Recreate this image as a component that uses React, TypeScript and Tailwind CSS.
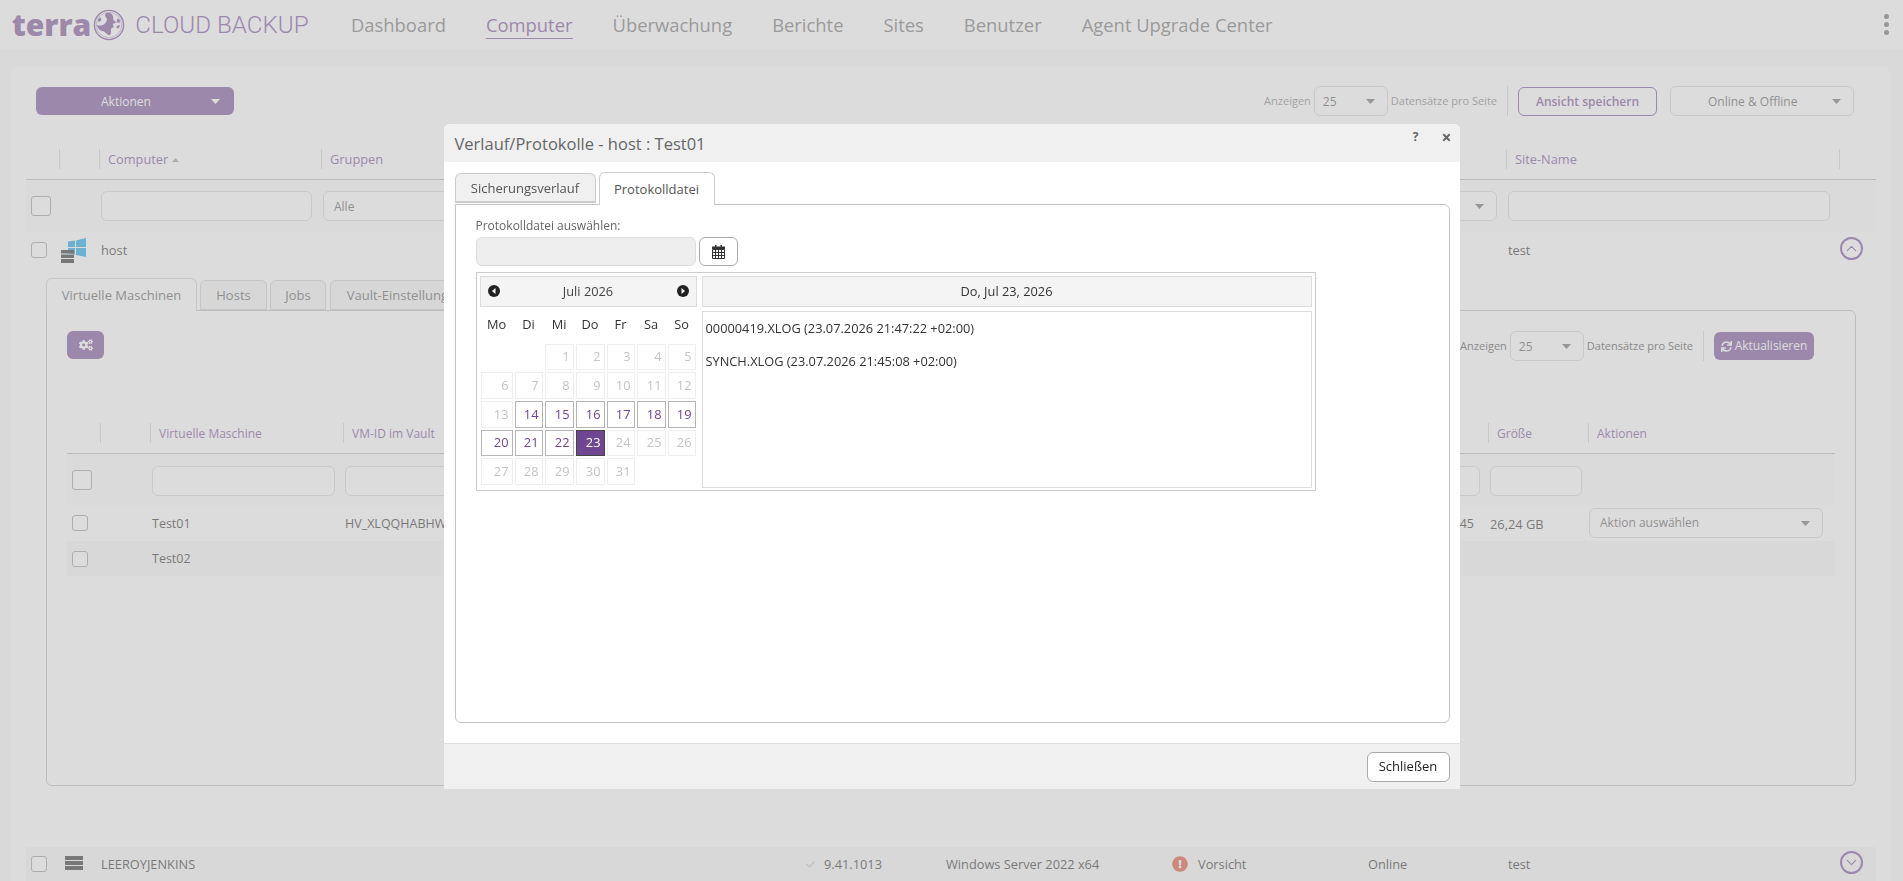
import { ChevronDown, ChevronUp } from 'lucide-react';
import React from 'react';
import { FaCheck, FaCogs, FaExclamationCircle, FaSync, FaTimes } from 'react-icons/fa';

const NAV = ['Dashboard', 'Computer', 'Überwachung', 'Berichte', 'Sites', 'Benutzer', 'Agent Upgrade Center'];

const DAYS = ['Mo', 'Di', 'Mi', 'Do', 'Fr', 'Sa', 'So'];
const ACTIVE_DAYS = [14, 15, 16, 17, 18, 19, 20, 21, 22];

const Caret = ({ className = 'text-[#666]' }: { className?: string }) => (
  <svg width="9" height="5" viewBox="0 0 9 5" className={`shrink-0 ${className}`}>
    <path d="M0 0h9L4.500 5z" fill="currentColor" />
  </svg>
);

const Checkbox = ({ large }: { large?: boolean }) => (
  <span
    className={`block rounded-[3px] border border-[#999] bg-white ${large ? 'h-5 w-5' : 'h-4 w-4'}`}
  />
);

const Select = ({
  label,
  className,
  labelClass = 'pt-px',
}: {
  label: string;
  className: string;
  labelClass?: string;
}) => (
  <div
    className={`flex h-[30px] shrink-0 items-center justify-between rounded-[6px] border border-[#d3d3d3] bg-white pr-[12px] text-[#555] ${className}`}
  >
    <span className={labelClass}>{label}</span>
    <Caret />
  </div>
);

const PageSize = ({ muted }: { muted?: boolean }) => (
  <div className={`flex items-center text-[11px] ${muted ? 'text-[#7d7d7d]' : 'text-[#444]'}`}>
    <span>Anzeigen</span>
    <Select label="25" className="mx-[3px] w-[74px] pl-[8px] text-[12px]" />
    <span>Datensätze pro Seite</span>
    <span className="ml-[10px] h-[30px] w-px bg-[#d3d3d3]" />
  </div>
);

const HeadCell = ({ label, className, sorted }: { label?: string; className: string; sorted?: boolean }) => (
  <div className={`flex h-5 shrink-0 items-center gap-1 border-l border-[#d3d3d3] pl-2 pt-[2px] text-[#6f4691] ${className}`}>
    {label}
    {sorted && (
      <svg width="7" height="4" viewBox="0 0 7 4" className="text-[#999]">
        <path d="M3.500 0L7 4H0z" fill="currentColor" />
      </svg>
    )}
  </div>
);

const Input = ({ className }: { className: string }) => (
  <div className={`h-[30px] shrink-0 rounded-[6px] border border-[#d3d3d3] bg-white ${className}`} />
);

const Circle = ({ up }: { up?: boolean }) => (
  <span className="flex h-[23px] w-[23px] items-center justify-center rounded-full border-2 border-[#6f4691] text-[#6f4691]">
    {up ? <ChevronUp size={17} strokeWidth={1.5} /> : <ChevronDown size={17} strokeWidth={1.5} />}
  </span>
);

const Tab = ({ label, className }: { label: string; className: string }) => (
  <div
    className={`mt-[2px] flex h-[30px] items-center rounded-t-[6px] border border-[#ccc] bg-[#f3f3f3] pt-[2px] text-[13px] text-[#555] ${className}`}
  >
    {label}
  </div>
);

const WindowsHost = () => (
  <svg width="25" height="25" viewBox="0 0 25 25">
    <path d="M7 3.500l7-1V9H7zM15 2.400L25 0v9H15zM7 10h7v6.500l-7-1zM15 10h10v9l-10-2z" fill="#0a9fe6" />
    <path d="M0 12h13v3.500H0zM0 16.500h13V20H0zM0 21h13v4H0z" fill="#222" />
  </svg>
);

const Globe = () => (
  <svg width="32" height="32" viewBox="0 0 34 34" className="ml-[2px] text-[#6f4691]">
    <circle cx="17" cy="17" r="15.500" fill="none" stroke="currentColor" strokeWidth="1.500" />
    <circle cx="17" cy="17" r="13.500" fill="none" stroke="currentColor" strokeWidth="0.500" />
    <path
      d="M13 5c3-2 7-1 8 2 1 2 0 4 1 5l3 2-4 2 1 3-3 2c0 3 1 6-2 7-3-2-5-5-8-5-3-1-4-3-5-6 3 1 6 1 8-1 2-1 2-3 3-5-1-2-3-4-2-6z"
      fill="currentColor"
    />
    <path d="M26 10l3 2-1 3-3-1zM25 18l4-1-2 4-2-1zM5 11l3-2 1 3-3 2z" fill="currentColor" />
  </svg>
);

const CalendarIcon = () => (
  <svg width="13" height="14" viewBox="0 0 13 14" className="text-[#333]">
    <path d="M3 0h1.500v2H3zM8.500 0H10v2H8.500z" fill="currentColor" />
    <path d="M0 1.500h13V4H0z" fill="currentColor" />
    <path
      d="M.5 4.500h12v9H.5zM3.500 4.500v9M6.500 4.500v9M9.500 4.500v9M.5 7.500h12M.5 10.500h12"
      fill="none"
      stroke="currentColor"
      strokeWidth="1"
    />
  </svg>
);

const MonthArrow = ({ left }: { left?: boolean }) => (
  <svg width="12" height="12" viewBox="0 0 12 12" className="mb-[2px]">
    <circle cx="6" cy="6" r="6" fill="#222" />
    <path d={left ? 'M7.500 3v6L4 6z' : 'M4.500 3v6L8 6z'} fill="#fff" />
  </svg>
);

const DayCell = ({ day }: { day: number }) => {
  const selected = day === 23;
  const active = ACTIVE_DAYS.includes(day);
  let tone = 'border-[#eee] text-[#c4c4c4]';
  if (active) tone = 'border-[#b5b5b5] text-[#6f4691]';
  if (selected) tone = 'border-[#444] bg-[#6f4691] text-white';
  return <div className={`flex items-center justify-end border pr-[3px] text-[12.800px] ${tone}`}>{day}</div>;
};

const Calendar = () => (
  <div className="flex h-[219px] w-[840px] gap-[5px] border border-[#ccc] p-[3px] text-[12.800px]">
    <div className="w-[217px] shrink-0">
      <div className="flex h-[31px] items-center justify-between border border-[#ddd] bg-[#f4f4f4] px-[7px] text-[#444]">
        <MonthArrow left />
        <span>Juli 2026</span>
        <MonthArrow />
      </div>
      <div className="ml-[1px] grid grid-cols-[32px_28px_29px_29px_28px_29px_28px] gap-x-[2px]">
        {DAYS.map((d) => (
          <div key={d} className="flex h-[37px] items-center justify-center pb-[2px] text-[#333]">
            {d}
          </div>
        ))}
      </div>
      <div className="ml-[1px] grid grid-cols-[32px_28px_29px_29px_28px_29px_28px] grid-rows-[26px_27px_27px_26px_27px] gap-x-[2px] gap-y-[2px]">
        <span />
        <span />
        {Array.from({ length: 31 }, (_, i) => (
          <DayCell key={i} day={i + 1} />
        ))}
      </div>
    </div>
    <div className="w-[610px] shrink-0">
      <div className="flex h-[31px] items-center justify-center border border-[#ddd] bg-[#f4f4f4] text-[#333]">
        Do, Jul 23, 2026
      </div>
      <div className="mt-[4px] h-[177px] border border-[#ddd] pl-[3px] pt-[4px] text-[#333]">
        <p className="h-[33px] leading-[25px]">00000419.XLOG (23.07.2026 21:47:22 +02:00)</p>
        <p className="leading-[25px]">SYNCH.XLOG (23.07.2026 21:45:08 +02:00)</p>
      </div>
    </div>
  </div>
);

const Modal = () => (
  <div className="fixed inset-0 z-20 flex justify-center pt-[124px]">
    <div className="flex h-[665px] w-[1016px] flex-col rounded-t-[6px] bg-white">
      <div className="flex h-[38px] shrink-0 items-center justify-between rounded-t-[6px] bg-[#f0f0f0] pl-[11px] pr-[8px]">
        <span className="pt-[2px] text-[16.500px] text-[#666]">Verlauf/Protokolle - host : Test01</span>
        <div className="mb-[12px] flex items-center gap-[22px] text-[#666]">
          <span className="text-[12px] font-bold">?</span>
          <FaTimes size={11} />
        </div>
      </div>
      <div className="ml-[11px] mt-[10px] flex items-end">
        <div className="mb-[1px] flex h-[30px] w-[141px] items-center justify-center rounded-t-[6px] border border-b-2 border-[#ccc] bg-[#f0f0f0] pt-[2px] text-[13px] text-[#555]">
          Sicherungsverlauf
        </div>
        <div className="relative z-10 ml-[3px] -mb-px flex h-[33px] w-[116px] items-center justify-center rounded-t-[6px] border border-b-0 border-[#ccc] bg-white pt-[2px] text-[13px] text-[#555]">
          Protokolldatei
        </div>
      </div>
      <div className="ml-[11px] mr-[10px] h-[519px] rounded-b-[6px] rounded-tr-[6px] border border-[#c4c4c4] pl-[20px] pt-[13px]">
        <p className="h-[19px] text-[12px] leading-[16px] text-[#666]">Protokolldatei auswählen:</p>
        <div className="flex gap-[3px]">
          <div className="h-[29px] w-[220px] rounded-[6px] border border-[#ddd] bg-[#eee]" />
          <div className="flex h-[29px] w-[39px] items-center justify-center rounded-[6px] border border-[#aaa] bg-white">
            <CalendarIcon />
          </div>
        </div>
        <div className="mt-[6px]">
          <Calendar />
        </div>
      </div>
      <div className="mt-[20px] flex h-[46px] flex-1 items-center justify-end border-t border-[#ddd] bg-[#f0f0f0] pr-[10px]">
        <div className="flex h-[30px] w-[83px] items-center justify-center rounded-[6px] border border-[#aaa] bg-white text-[13px] text-[#222]">
          Schließen
        </div>
      </div>
    </div>
  </div>
);

const Header = () => (
  <header className="flex h-[51px] items-center border-b border-[#f1f1f1] bg-white pl-3">
    <div className="flex w-[339px] items-center text-[#6f4691]">
      <span className="text-[30px] font-extrabold leading-none">terra</span>
      <Globe />
      <span className="ml-[10px] font-['Roboto',sans-serif] text-[24.200px] font-light">CLOUD BACKUP</span>
    </div>
    <nav className="flex gap-[40px] text-[18.400px] text-[#6d6d6d]">
      {NAV.map((item) => (
        <span key={item} className={item === 'Computer' ? 'border-b border-[#6f4691] text-[#6f4691]' : 'border-b border-transparent'}>
          {item}
        </span>
      ))}
    </nav>
    <div className="mb-[2px] ml-auto mr-[14px] flex flex-col gap-[3px]">
      <span className="h-[5px] w-[5px] rounded-full bg-[#666]" />
      <span className="h-[5px] w-[5px] rounded-full bg-[#666]" />
      <span className="h-[5px] w-[5px] rounded-full bg-[#666]" />
    </div>
  </header>
);

const VmTable = () => (
  <div className="mx-[20px] mt-[62px] text-[12.500px] text-[#222]">
    <div className="flex h-[31px] border-b border-[#b6b6b6] text-[12px]">
      <span className="w-[33px] shrink-0" />
      <HeadCell className="w-[50px]" />
      <HeadCell className="w-[193px]" label="Virtuelle Maschine" />
      <HeadCell className="w-[1145px]" label="VM-ID im Vault" />
      <HeadCell className="w-[100px]" label="Größe" />
      <HeadCell className="flex-1" label="Aktionen" />
    </div>
    <div className="flex h-[51px] items-start bg-[#fbfbfb] pt-[12px]">
      <span className="mt-[4px] w-[85px] shrink-0 pl-[5px]">
        <Checkbox large />
      </span>
      <Input className="w-[183px]" />
      <Input className="ml-[10px] w-[1135px]" />
      <Input className="ml-[10px] w-[92px]" />
    </div>
    <div className="flex h-[36px] items-center">
      <span className="w-[85px] shrink-0 pl-[5px]">
        <Checkbox />
      </span>
      <span className="w-[193px] shrink-0 pt-[3px]">Test01</span>
      <span className="w-[1100px] shrink-0 pt-[3px]">HV_XLQQHABHW</span>
      <span className="w-[45px] shrink-0 pr-[16px] pt-[3px] text-right">45</span>
      <span className="w-[99px] shrink-0 pt-[3px] text-[12.800px]">26,24 GB</span>
      <Select label="Aktion auswählen" labelClass="" className="w-[234px] pl-[10px] text-[12px]" />
    </div>
    <div className="flex h-[35px] items-center bg-[#f6f6f6]">
      <span className="w-[85px] shrink-0 pl-[5px]">
        <Checkbox />
      </span>
      <span className="pt-px">Test02</span>
    </div>
  </div>
);

const DetailTabs = () => (
  <div className="ml-[20px] mt-[10px] w-[1810px]">
    <div className="flex h-[32px] items-start gap-[3px]">
      <div className="relative z-[1] flex h-[33px] w-[151px] items-center justify-center rounded-t-[6px] border border-b-0 border-[#ccc] bg-white pt-[2px] text-[13px] text-[#555]">
        Virtuelle Maschinen
      </div>
      <Tab label="Hosts" className="w-[67px] justify-center" />
      <Tab label="Jobs" className="w-[56px] justify-center" />
      <Tab label="Vault-Einstellungen" className="ml-px w-[150px] justify-center" />
    </div>
    <div className="h-[476px] rounded-b-[6px] rounded-tr-[6px] border border-[#bbb]">
      <div className="flex items-start justify-between pl-[20px] pr-[41px] pt-[20px]">
        <div className="flex h-[28px] w-[37px] items-center justify-center rounded-[6px] bg-[#6f4691] text-white">
          <FaCogs size={14} />
        </div>
        <div className="flex items-center">
          <PageSize />
          <div className="ml-[10px] flex h-[28px] w-[100px] items-center justify-center gap-[3px] rounded-[6px] bg-[#6f4691] text-[12px] text-white">
            <FaSync size={11} />
            Aktualisieren
          </div>
        </div>
      </div>
      <VmTable />
    </div>
  </div>
);

const HostRow = ({ icon, name, up, cells, className }: { icon: React.ReactNode; name: string; up?: boolean; cells?: boolean; className?: string }) => (
  <div className={`flex items-center text-[12.800px] text-[#222] ${className}`}>
    <span className="w-[33px] shrink-0 pl-[5px]">
      <Checkbox />
    </span>
    <span className="flex w-[42px] shrink-0 justify-start pl-[2px]">{icon}</span>
    <span className="w-[704px] shrink-0 pt-[2px]">{name}</span>
    <span className="w-[19px] shrink-0 pl-[1px] text-[#ccc]">{cells && <FaCheck size={9} />}</span>
    <span className="w-[122px] shrink-0 pt-[2px]">{cells && '9.41.1013'}</span>
    <span className="w-[226px] shrink-0 pt-[2px]">{cells && 'Windows Server 2022 x64'}</span>
    <span className="flex w-[196px] shrink-0 items-center gap-[10px]">
      {cells && (
        <>
          <FaExclamationCircle size={16} className="text-[#d9452f]" />
          <span className="pt-[2px]">Vorsicht</span>
        </>
      )}
    </span>
    <span className="w-[140px] shrink-0 pt-[2px]">{cells && 'Online'}</span>
    <span className="w-[332px] shrink-0 pt-[2px]">test</span>
    <span className="mb-[3px]">
      <Circle up={up} />
    </span>
  </div>
);

const ServerIcon = () => (
  <svg width="18" height="14" viewBox="0 0 18 14" className="mb-[3px] ml-[4px]">
    <path d="M0 0h18v4H0zM0 5h18v4H0zM0 10h18v4H0z" fill="#222" />
  </svg>
);

const Main = () => (
  <main className="ml-[11px] mt-[15px] h-[815px] w-[1879px] rounded-t-[8px] bg-white pt-[20px]">
    <div className="flex h-[30px] items-center justify-between pl-[25px] pr-[36px]">
      <div className="flex h-[28px] w-[198px] items-center rounded-[6px] bg-[#6f4691] pl-[65px] pr-[14px] text-[12px] text-white">
        <span className="flex-1 pt-px">Aktionen</span>
        <Caret className="text-white" />
      </div>
      <div className="flex items-center">
        <PageSize muted />
        <div className="ml-[10px] flex h-[29px] w-[139px] items-center justify-center rounded-[6px] border border-[#6f4691] pt-[2px] text-[12px] font-semibold text-[#6f4691]">
          Ansicht speichern
        </div>
        <Select label="Online & Offline" className="ml-[13px] w-[184px] pl-[37px] text-[12px]" />
      </div>
    </div>
    <div className="ml-[15px] mr-[14px] mt-[33px]">
      <div className="flex h-[31px] border-b border-[#b6b6b6] text-[12.800px]">
        <span className="w-[33px] shrink-0" />
        <HeadCell className="w-[40px]" />
        <HeadCell className="w-[222px]" label="Computer" sorted />
        <HeadCell className="w-[1185px]" label="Gruppen" />
        <HeadCell className="w-[333px]" label="Site-Name" />
        <HeadCell className="flex-1" />
      </div>
      <div className="flex h-[52px] items-center bg-[#fbfbfb] text-[12px] text-[#555]">
        <span className="w-[75px] shrink-0 pl-[5px]">
          <Checkbox large />
        </span>
        <Input className="w-[211px]" />
        <Select label="Alle" labelClass="pt-[2px]" className="ml-[11px] w-[1174px] pl-[10px]" />
        <Input className="ml-[11px] w-[322px]" />
      </div>
      <HostRow icon={<WindowsHost />} name="host" up className="h-[36px]" />
      <DetailTabs />
      <HostRow icon={<ServerIcon />} name="LEEROYJENKINS" cells className="mt-[61px] h-[34px] bg-[#f6f6f6]" />
    </div>
  </main>
);

const App = () => (
  <div className="h-screen overflow-hidden bg-[#f8f8f8] font-['Open_Sans',sans-serif]">
    <Header />
    <Main />
    <div className="fixed inset-0 z-10 bg-[#bfbfbf]/55" />
    <Modal />
  </div>
);

export default App;
